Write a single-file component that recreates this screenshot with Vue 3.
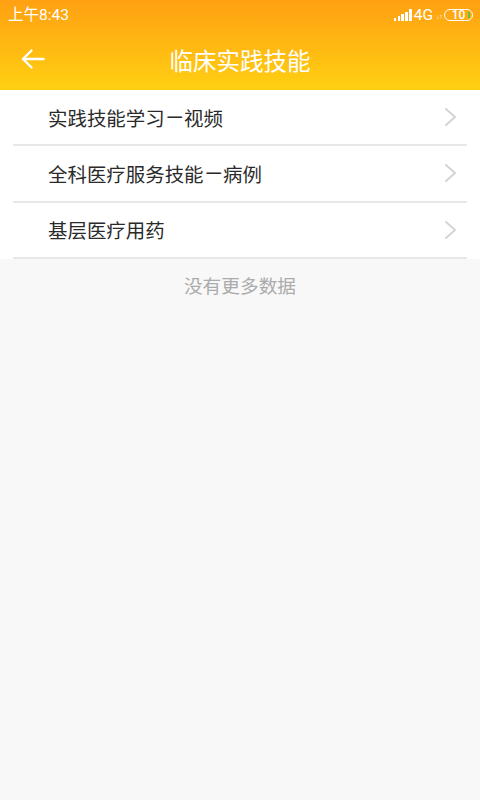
<script setup>
const rows = [
  ['实践技能学习', '视频'],
  ['全科医疗服务技能', '病例'],
  ['基层医疗用药', '']
]
const bars = [3, 5, 7, 9, 12]
</script>

<template>
  <div class="page">
    <header class="head">
      <div class="status">
        <span class="time">上午8:43</span>
        <div class="status-right">
          <div class="signal">
            <i v-for="h in bars" :key="h" class="bar" :style="{ height: h + 'px' }"></i>
          </div>
          <span class="net">4G</span>
          <span class="arrows">↓↑</span>
          <div class="battery">
            <span class="level">10</span>
            <i class="juice"></i>
          </div>
        </div>
      </div>
      <div class="toolbar">
        <button class="back" aria-label="返回">
          <svg width="24" height="20" viewBox="0 0 24 20">
            <path d="M10.5 1.5 L2 10 L10.5 18.5 M2 10 H22.5" fill="none" stroke="#fff" stroke-width="2.4" stroke-linecap="round" stroke-linejoin="round" />
          </svg>
        </button>
        <h1 class="title">临床实践技能</h1>
      </div>
    </header>
    <ul class="list">
      <li v-for="r in rows" :key="r[0]" class="row">
        <span class="label">{{ r[0] }}<span v-if="r[1]" class="dash">一</span>{{ r[1] }}</span>
        <svg class="chev" width="13" height="20" viewBox="0 0 13 20">
          <path d="M1.5 1.5 L11 10 L1.5 18.5" fill="none" stroke="#d2d2d2" stroke-width="1.8" />
        </svg>
      </li>
    </ul>
    <p class="more">没有更多数据</p>
  </div>
</template>

<style scoped>
.page {
  width: 480px;
  height: 800px;
  overflow: hidden;
  background: #f8f8f8;
  font-family: "Noto Sans CJK SC", "Noto Sans", sans-serif;
}
.head {
  height: 90px;
  background: linear-gradient(180deg, #ffa012 0%, #ffd012 100%);
  color: #fff;
}
.status {
  height: 30px;
  display: flex;
  align-items: center;
  justify-content: space-between;
  padding: 0 7px 0 8px;
}
.time {
  font-family: "Roboto", "Noto Sans CJK SC", sans-serif;
  font-size: 15.5px;
  line-height: 30px;
}
.status-right {
  display: flex;
  align-items: center;
}
.signal {
  display: flex;
  align-items: flex-end;
  gap: 1.4px;
  height: 12px;
  margin-right: 2px;
}
.bar {
  width: 2.5px;
  background: #fff;
}
.net {
  font-family: "Roboto", sans-serif;
  font-size: 15.5px;
  line-height: 30px;
}
.arrows {
  font-size: 4px;
  width: 8px;
  margin: 3px 0 0 3px;
  letter-spacing: -1px;
  overflow: hidden;
  white-space: nowrap;
}
.battery {
  position: relative;
  box-sizing: border-box;
  width: 29px;
  height: 12px;
  border: 1.4px solid #fff;
  border-radius: 6px;
  display: flex;
  align-items: center;
  justify-content: center;
}
.level {
  font-family: "Roboto", sans-serif;
  font-size: 12px;
  font-weight: 500;
  line-height: 11px;
}
.juice {
  position: absolute;
  right: 2px;
  top: 1.5px;
  width: 2px;
  height: 6px;
  background: #5cc83c;
}
.toolbar {
  height: 60px;
  position: relative;
  display: flex;
  align-items: center;
  justify-content: center;
}
.back {
  position: absolute;
  left: 21px;
  top: 19px;
  padding: 0;
  border: 0;
  background: none;
  line-height: 0;
}
.title {
  margin: 0;
  font-size: 23.5px;
  font-weight: 400;
  line-height: 60px;
}
.list {
  margin: 0;
  padding: 0;
  list-style: none;
  background: #fff;
}
.row {
  height: 56.33px;
  box-sizing: border-box;
  margin: 0 13px;
  padding: 0 10px 0 35px;
  display: flex;
  align-items: center;
  justify-content: space-between;
  border-bottom: 2px solid #e8e8e8;
}
.label {
  font-size: 19.45px;
  font-weight: 400;
  color: #2a2a2a;
}
.dash {
  display: inline-block;
  transform: translateY(-1px) scaleX(0.82);
}
.more {
  margin: 0;
  height: 54px;
  text-align: center;
  font-size: 18.7px;
  font-weight: 400;
  line-height: 52px;
  color: #ababab;
}
</style>
